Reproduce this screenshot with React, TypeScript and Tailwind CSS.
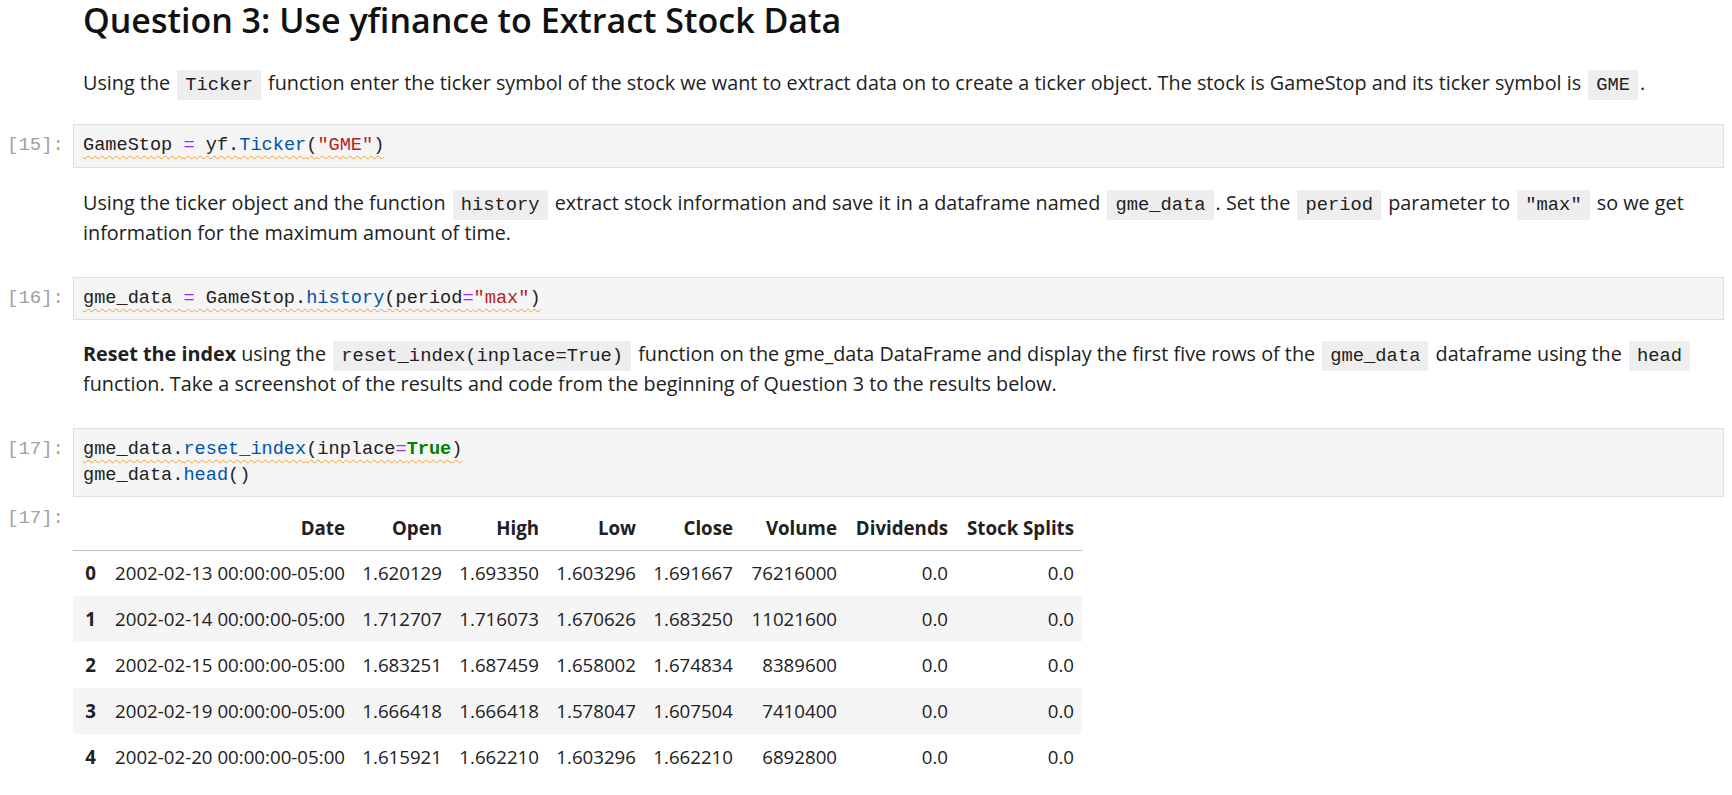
import type { ReactNode } from "react";

const sans = "font-['Open_Sans',sans-serif]";
const mono = "font-['Liberation_Mono',monospace]";

function Prompt({ n, className = "" }: { n: number; className?: string }) {
  return (
    <div
      className={`w-[73px] shrink-0 pr-[9px] text-right ${mono} text-[19px] text-[#a0a0a0] ${className}`}
    >
      [{n}]:
    </div>
  );
}

function Code({ children }: { children: ReactNode }) {
  return (
    <code
      className={`${mono} text-[18.8px] leading-none bg-[#eeeeee] text-[#212121] px-[8px] py-[4px] mx-[2px]`}
    >
      {children}
    </code>
  );
}

function CodeCell({
  n,
  className = "",
  children,
}: {
  n: number;
  className?: string;
  children: ReactNode;
}) {
  return (
    <div className={`flex ${className}`}>
      <Prompt n={n} className="pt-[9px] leading-[25px]" />
      <div
        className={`flex-1 mr-[8px] bg-[#f5f5f5] border border-[#e0e0e0] px-[9px] py-[8px] ${mono} text-[18.6px] leading-[25.5px] text-[#212121]`}
      >
        {children}
      </div>
    </div>
  );
}

const Op = ({ c }: { c: string }) => <span className="text-[#aa22ff]">{c}</span>;
const Prop = ({ c }: { c: string }) => <span className="text-[#0055aa]">{c}</span>;
const Str = ({ c }: { c: string }) => <span className="text-[#ba2121]">{c}</span>;

function Squiggle({ children }: { children: ReactNode }) {
  return (
    <span className="underline decoration-wavy decoration-[#f0a030] decoration-1 underline-offset-[5px] whitespace-pre">
      {children}
    </span>
  );
}

const rows = [
  ["0", "2002-02-13 00:00:00-05:00", "1.620129", "1.693350", "1.603296", "1.691667", "76216000", "0.0", "0.0"],
  ["1", "2002-02-14 00:00:00-05:00", "1.712707", "1.716073", "1.670626", "1.683250", "11021600", "0.0", "0.0"],
  ["2", "2002-02-15 00:00:00-05:00", "1.683251", "1.687459", "1.658002", "1.674834", "8389600", "0.0", "0.0"],
  ["3", "2002-02-19 00:00:00-05:00", "1.666418", "1.666418", "1.578047", "1.607504", "7410400", "0.0", "0.0"],
  ["4", "2002-02-20 00:00:00-05:00", "1.615921", "1.662210", "1.603296", "1.662210", "6892800", "0.0", "0.0"],
];

const headers = ["", "Date", "Open", "High", "Low", "Close", "Volume", "Dividends", "Stock Splits"];
const widths = [31, 249, 97, 97, 97, 97, 104, 111, 126];

export default function App() {
  return (
    <div className={`w-[1732px] h-[795px] overflow-hidden bg-white ${sans} text-[#212121]`}>
      <div className="pl-[83px] h-[46px]">
        <h2 className="text-[34px] leading-[40px] font-semibold text-[#111111]">
          Question 3: Use yfinance to Extract Stock Data
        </h2>
      </div>

      <p className="pl-[83px] mt-[22px] text-[19.8px] leading-[30px] whitespace-nowrap">
        Using the <Code>Ticker</Code> function enter the ticker symbol of the stock we want to extract data on to
        create a ticker object. The stock is GameStop and its ticker symbol is <Code>GME</Code>.
      </p>

      <CodeCell n={15} className="mt-[26px]">
        <Squiggle>
          GameStop <Op c="=" /> yf.<Prop c="Ticker" />(<Str c={'"GME"'} />)
        </Squiggle>
      </CodeCell>

      <p className="pl-[83px] mt-[20px] text-[19.8px] leading-[30px] whitespace-nowrap">
        Using the ticker object and the function <Code>history</Code> extract stock information and save it in a
        dataframe named <Code>gme_data</Code>. Set the <Code>period</Code> parameter to <Code>"max"</Code> so we get
        <br />
        information for the maximum amount of time.
      </p>

      <CodeCell n={16} className="mt-[29px]">
        <Squiggle>
          gme_data <Op c="=" /> GameStop.<Prop c="history" />(period<Op c="=" />
          <Str c={'"max"'} />)
        </Squiggle>
      </CodeCell>

      <p className="pl-[83px] mt-[19px] text-[19.8px] leading-[30px] whitespace-nowrap">
        <b className="font-bold">Reset the index</b> using the <Code>reset_index(inplace=True)</Code> function on the
        gme_data DataFrame and display the first five rows of the <Code>gme_data</Code> dataframe using the{" "}
        <Code>head</Code>
        <br />
        function. Take a screenshot of the results and code from the beginning of Question 3 to the results below.
      </p>

      <CodeCell n={17} className="mt-[29px]">
        <div>
          <Squiggle>
            gme_data.<Prop c="reset_index" />(inplace<Op c="=" />
            <span className="text-[#008000] font-bold">True</span>)
          </Squiggle>
        </div>
        <div>
          gme_data.<Prop c="head" />()
        </div>
      </CodeCell>

      <div className="flex mt-[9px]">
        <Prompt n={17} className="pt-[0px] leading-[25px]" />
        <table className="table-fixed border-collapse text-[18.7px] text-[#212121]">
          <colgroup>
            {widths.map((w, i) => (
              <col key={i} style={{ width: w }} />
            ))}
          </colgroup>
          <thead>
            <tr className="h-[44px] border-b border-[#bdbdbd]">
              {headers.map((h, i) => (
                <th key={i} className="px-[8px] text-right font-bold whitespace-nowrap">
                  {h}
                </th>
              ))}
            </tr>
          </thead>
          <tbody>
            {rows.map((r, ri) => (
              <tr key={ri} className={`h-[46px] ${ri % 2 === 1 ? "bg-[#f5f5f5]" : ""}`}>
                {r.map((c, ci) =>
                  ci === 0 ? (
                    <th key={ci} className="px-[8px] text-right font-bold">
                      {c}
                    </th>
                  ) : (
                    <td key={ci} className="px-[8px] text-right whitespace-nowrap">
                      {c}
                    </td>
                  )
                )}
              </tr>
            ))}
          </tbody>
        </table>
      </div>
    </div>
  );
}
